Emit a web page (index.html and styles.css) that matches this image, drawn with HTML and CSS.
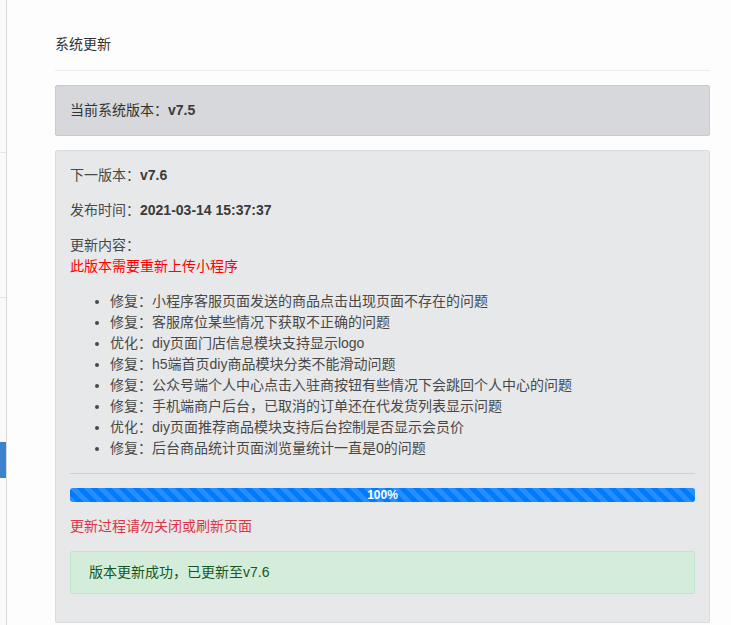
FILE: index.html
```html
<!DOCTYPE html>
<html lang="zh-CN">
<head>
<meta charset="utf-8">
<title>系统更新</title>
<link rel="stylesheet" href="styles.css">
</head>
<body>
<div class="layout">
  <aside class="side">
    <div class="side-sec side-sec-first"></div>
    <div class="side-sec"></div>
    <div class="side-sec side-sec-last"><div class="side-active"></div></div>
  </aside>
  <main class="main">
    <div class="page-title">系统更新</div>
    <div class="box box-current">当前系统版本：<b>v7.5</b></div>
    <div class="box box-next">
      <p>下一版本：<b>v7.6</b></p>
      <p>发布时间：<b>2021-03-14 15:37:37</b></p>
      <p>更新内容：<br><span class="red">此版本需要重新上传小程序</span></p>
      <ul class="changes">
        <li>修复：小程序客服页面发送的商品点击出现页面不存在的问题</li>
        <li>修复：客服席位某些情况下获取不正确的问题</li>
        <li>优化：diy页面门店信息模块支持显示logo</li>
        <li>修复：h5端首页diy商品模块分类不能滑动问题</li>
        <li>修复：公众号端个人中心点击入驻商按钮有些情况下会跳回个人中心的问题</li>
        <li>修复：手机端商户后台，已取消的订单还在代发货列表显示问题</li>
        <li>优化：diy页面推荐商品模块支持后台控制是否显示会员价</li>
        <li>修复：后台商品统计页面浏览量统计一直是0的问题</li>
      </ul>
      <hr class="sep">
      <div class="progress"><div class="progress-bar" style="width: 100%">100%</div></div>
      <p class="warn">更新过程请勿关闭或刷新页面</p>
      <div class="alert-success">版本更新成功，已更新至v7.6</div>
    </div>
  </main>
</div>
</body>
</html>
```
FILE: styles.css
```css
html, body {
  margin: 0;
  padding: 0;
  background: #ffffff;
}
body {
  font-family: "Liberation Sans", "Noto Sans CJK SC", sans-serif;
  font-size: 14px;
  line-height: 21px;
  color: #484848;
}
.layout {
  display: flex;
  min-height: 625px;
}
.side {
  width: 6px;
  flex: none;
  background: #fafafa;
  border-right: 1px solid #d9d9d9;
  display: flex;
  flex-direction: column;
}
.side-sec {
  height: 144px;
  border-bottom: 1px solid #e6e6e6;
}
.side-sec-first {
  height: 152px;
}
.side-sec-last {
  border-bottom: none;
  padding-top: 144px;
}
.side-active {
  height: 36px;
  background: #3d82cc;
}
.main {
  flex: 1;
  background: #fdfdfd;
  padding: 20px 21px 0 48px;
}
.page-title {
  color: #333;
  padding: 14px 0 15px;
  border-bottom: 1px solid #ececec;
  margin-bottom: 14px;
}
.box {
  border: 1px solid;
  border-radius: 2px;
  padding: 14px;
}
.box-current {
  background: #d6d8db;
  border-color: #c8cacc;
  color: #333;
  margin-bottom: 14px;
}
.box-next {
  background: #e7e8ea;
  border-color: #dadbdd;
}
.box b {
  font-weight: bold;
  color: #3a3a3a;
}
.box p {
  margin: 0 0 14px;
}
.red {
  color: #ff0000;
}
.changes {
  margin: 0 0 14px;
  padding-left: 40px;
}
.sep {
  border: 0;
  border-top: 1px solid #cfd0d2;
  margin: 0 0 14px;
  height: 0;
}
.progress {
  height: 14px;
  border-radius: 3px;
  background: #e9ecef;
  overflow: hidden;
  display: flex;
  margin-bottom: 14px;
}
.progress-bar {
  background-color: #007bff;
  background-image: linear-gradient(45deg, rgba(255,255,255,.15) 25%, transparent 25%, transparent 50%, rgba(255,255,255,.15) 50%, rgba(255,255,255,.15) 75%, transparent 75%, transparent);
  background-size: 14px 14px;
  color: #fff;
  font-size: 12px;
  font-weight: bold;
  line-height: 14px;
  text-align: center;
}
.box p.warn {
  color: #dc3545;
}
.alert-success {
  background: #d4edda;
  border: 1px solid #c3e6cb;
  border-radius: 2px;
  color: #155724;
  padding: 10px 18px;
  margin-bottom: 14px;
}
```
